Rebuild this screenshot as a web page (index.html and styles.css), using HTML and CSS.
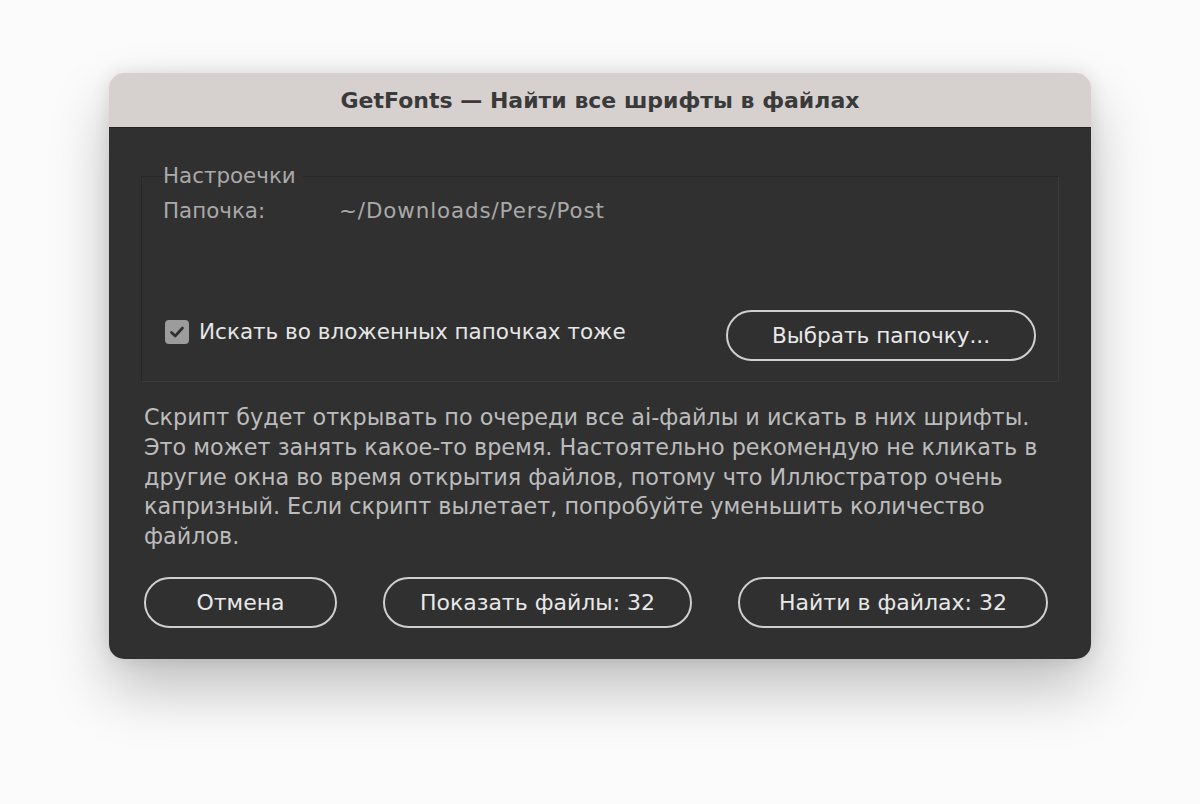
FILE: index.html
```html
<!DOCTYPE html>
<html lang="ru">
<head>
<meta charset="utf-8">
<title>GetFonts</title>
<link rel="stylesheet" href="styles.css">
</head>
<body>
<div class="window">
  <div class="titlebar">GetFonts — Найти все шрифты в файлах</div>
  <div class="content">
    <fieldset class="group">
      <legend class="legend">Настроечки</legend>
      <div class="folder-row">
        <span class="folder-label">Папочка:</span>
        <span class="folder-path">~/Downloads/Pers/Post</span>
      </div>
      <div class="option-row">
        <label class="check">
          <span class="check-box">
            <svg width="16" height="14" viewBox="0 0 16 14"><path d="M2.5 7.5 L6.2 11 L13.5 3" fill="none" stroke="#2e2e2e" stroke-width="2.6" stroke-linecap="round" stroke-linejoin="round"/></svg>
          </span>
          <span class="check-label">Искать во вложенных папочках тоже</span>
        </label>
        <button class="btn btn-choose">Выбрать папочку...</button>
      </div>
    </fieldset>
    <p class="note">Скрипт будет открывать по очереди все ai-файлы и искать в них шрифты. Это может занять какое-то время. Настоятельно рекомендую не кликать в другие окна во время открытия файлов, потому что Иллюстратор очень капризный. Если скрипт вылетает, попробуйте уменьшить количество файлов.</p>
    <div class="actions">
      <button class="btn btn-cancel">Отмена</button>
      <button class="btn btn-show">Показать файлы: 32</button>
      <button class="btn btn-find">Найти в файлах: 32</button>
    </div>
  </div>
</div>
</body>
</html>
```

FILE: styles.css
```css
* { box-sizing: border-box; }
html, body {
  margin: 0;
  padding: 0;
}
body {
  width: 1200px;
  height: 804px;
  background: #fbfbfb;
  font-family: "DejaVu Sans", "Liberation Sans", sans-serif;
  padding-top: 73px;
  overflow: hidden;
}
.window {
  width: 982px;
  margin-left: 109px;
  border-radius: 15px;
  overflow: hidden;
  box-shadow: 0 30px 60px rgba(0, 0, 0, 0.24), 0 0 18px rgba(0, 0, 0, 0.10);
}
.titlebar {
  height: 55px;
  background: #d6d1cf;
  border-bottom: 1px solid #232323;
  display: flex;
  align-items: center;
  justify-content: center;
  font-weight: bold;
  font-size: 22px;
  color: #3a3a3a;
  padding-top: 1px;
}
.content {
  background: #303030;
  padding: 37px 32px 31px 32px;
}
.group {
  margin: 0;
  width: 918px;
  height: 217px;
  border: 1px solid #262626;
  border-right-color: #3b3b3b;
  border-bottom-color: #3b3b3b;
  border-radius: 2px;
  padding: 0 20px 20px 21px;
  display: flex;
  flex-direction: column;
}
.legend {
  padding: 0 7px 0 0;
  margin-left: 0;
  font-size: 21.4px;
  color: #a9a9a9;
  line-height: 22px;
}
.folder-row {
  display: flex;
  font-size: 21.4px;
  color: #a9a9a9;
  margin-top: 11px;
  line-height: 26px;
}
.folder-label {
  width: 176px;
}
.folder-path {
  letter-spacing: 0.9px;
}
.option-row {
  margin-top: auto;
  display: flex;
  align-items: center;
  justify-content: space-between;
}
.check {
  display: flex;
  align-items: center;
  gap: 10px;
  margin-left: 2px;
  margin-top: -8px;
}
.check-box {
  width: 24px;
  height: 24px;
  border-radius: 4px;
  background: #9c9c9c;
  display: flex;
  align-items: center;
  justify-content: center;
}
.check-label {
  font-size: 21.5px;
  color: #e6e6e6;
}
.btn {
  height: 51px;
  border: 2px solid #cfcfcf;
  border-radius: 26px;
  background: transparent;
  color: #e8e8e8;
  font-family: "DejaVu Sans", "Liberation Sans", sans-serif;
  font-size: 22px;
  padding: 0;
  display: flex;
  align-items: center;
  justify-content: center;
}
.btn-choose {
  width: 310px;
  margin-right: 2px;
  font-size: 21.6px;
}
.note {
  margin: 21px 0 0 3px;
  font-size: 22.3px;
  line-height: 29.8px;
  color: #bcbcbc;
  width: 914px;
}
.actions {
  margin-top: 25px;
  margin-left: 3px;
  display: flex;
  gap: 46px;
}
.btn-cancel { width: 193px; }
.btn-show { width: 309px; }
.btn-find { width: 310px; }
```
